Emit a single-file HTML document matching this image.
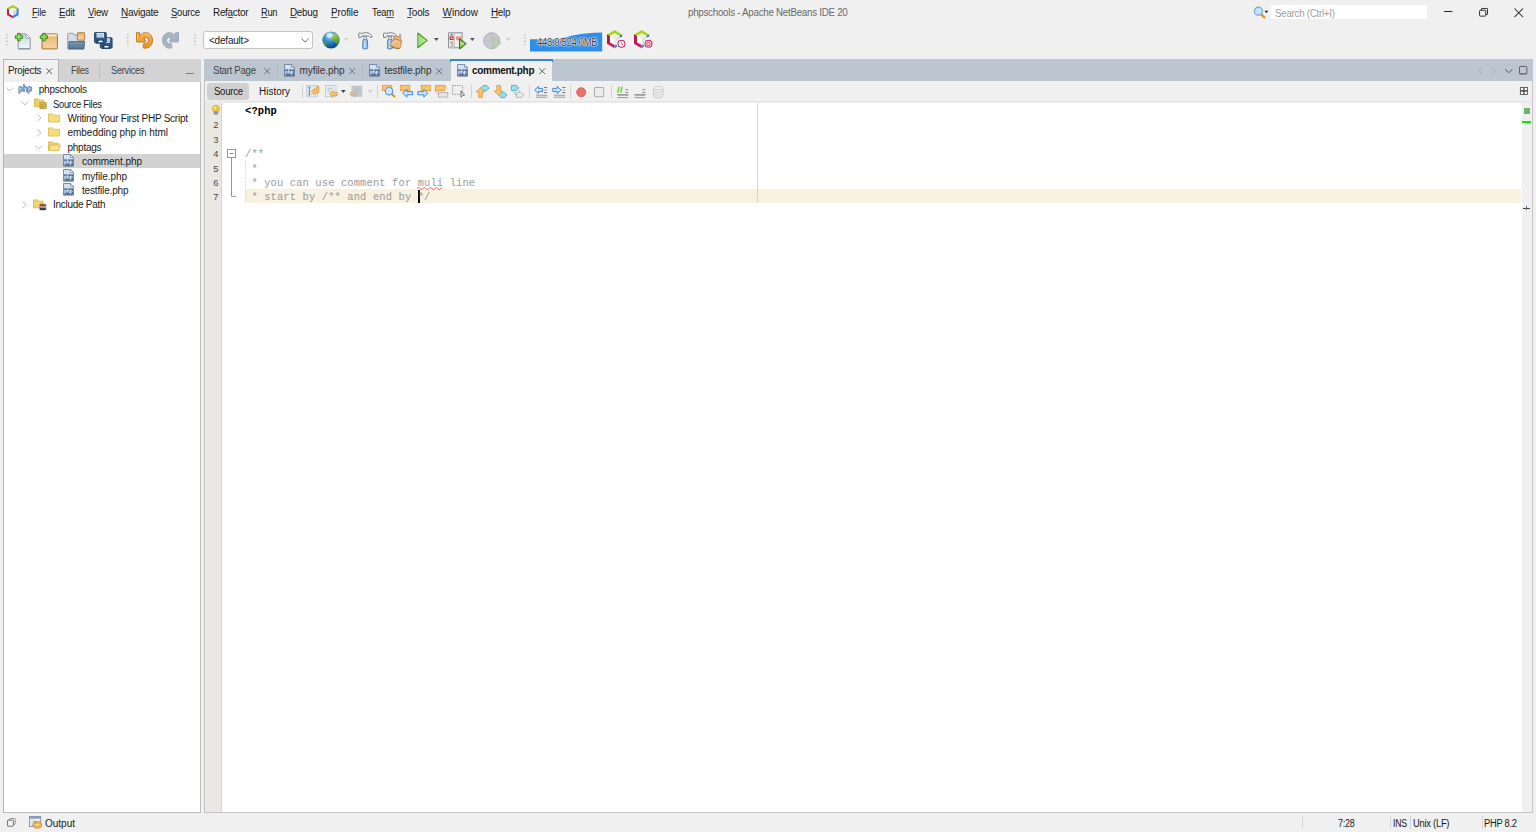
<!DOCTYPE html>
<html><head><meta charset="utf-8"><title>phpschools - Apache NetBeans IDE 20</title>
<style>
html,body{margin:0;padding:0;}
body{width:1536px;height:832px;overflow:hidden;background:#f0f0f0;position:relative;font-family:'Liberation Sans',sans-serif;}
#s div{position:absolute;box-sizing:border-box;}
.t{position:absolute;white-space:pre;}
.t u{text-decoration:underline;text-underline-offset:1px;text-decoration-thickness:1px;text-decoration-color:#505050;}
svg{position:absolute;overflow:visible;}
</style></head><body>
<div id="s">
<div style="left:3px;top:59px;width:198px;height:754px;background:#ffffff;border:1px solid #bebebe;border-left-color:#b4b4b4;"></div>
<div style="left:3px;top:59px;width:198px;height:22.5px;background:#d3d3d3;"></div>
<div style="left:3px;top:59px;width:56px;height:22.5px;background:#b7b7b7;"></div>
<div style="left:4px;top:60px;width:54.3px;height:21.5px;background:#f0f0f0;"></div>
<div style="left:99px;top:63px;width:1px;height:16px;background:#c0c0c0;"></div>
<div style="left:4px;top:153.8px;width:196px;height:14.1px;background:#d2d2d2;"></div>
<div style="left:204px;top:59px;width:1329px;height:754px;background:#ffffff;border:1px solid #c4c4c4;border-top:none;"></div>
<div style="left:204px;top:59px;width:1329px;height:22.2px;background:#bcc6d1;"></div>
<div style="left:450.4px;top:59px;width:102.4px;height:2.6px;background:#3b86d2;"></div>
<div style="left:451px;top:61.4px;width:101.4px;height:19.6px;background:#f0f0f0;"></div>
<div style="left:277px;top:63.5px;width:1px;height:14px;background:#b2bcc7;"></div>
<div style="left:362px;top:63.5px;width:1px;height:14px;background:#b2bcc7;"></div>
<div style="left:205px;top:81px;width:1327px;height:20px;background:#f0f0f0;"></div>
<div style="left:205px;top:100.6px;width:1327px;height:2.8px;background:linear-gradient(#f0f0f0,#dedede 42%,#ececec 75%,#ffffff);"></div>
<div style="left:206.6px;top:83.1px;width:42.8px;height:16.6px;background:#d0d0d0;border-radius:3px;"></div>
<div style="left:205px;top:103px;width:16.2px;height:709px;background:#e9e8e2;"></div>
<div style="left:221.2px;top:103px;width:0.9px;height:709px;background:#d4d4d2;"></div>
<div style="left:245px;top:189.2px;width:1276px;height:14px;background:#f8f1df;"></div>
<div style="left:757px;top:103px;width:1px;height:100.2px;background:#ebc9e3;"></div>
<div style="left:1521.5px;top:103px;width:10.5px;height:709px;background:#f0f0f0;"></div>
<div style="left:1523.5px;top:108px;width:6px;height:6px;background:#6db36d;"></div>
<div style="left:1522px;top:121px;width:9px;height:1.6px;background:#00f000;"></div>
<div style="left:1523px;top:207.6px;width:7px;height:1px;background:#444;"></div>
<div style="left:1526px;top:206px;width:1px;height:4px;background:#666;"></div>
<div style="left:418px;top:189.6px;width:1.5px;height:13.4px;background:#000;"></div>
<div style="left:301.5px;top:84.8px;width:1px;height:13.6px;background:#d2d2d2;"></div>
<div style="left:377px;top:84.8px;width:1px;height:13.6px;background:#d2d2d2;"></div>
<div style="left:470.5px;top:84.8px;width:1px;height:13.6px;background:#d2d2d2;"></div>
<div style="left:529px;top:84.8px;width:1px;height:13.6px;background:#d2d2d2;"></div>
<div style="left:570px;top:84.8px;width:1px;height:13.6px;background:#d2d2d2;"></div>
<div style="left:610.5px;top:84.8px;width:1px;height:13.6px;background:#d2d2d2;"></div>
<div style="left:202.6px;top:31px;width:110.9px;height:17.8px;background:#ffffff;border:1px solid #c4c4c4;border-radius:3px;"></div>
<div style="left:1271px;top:5px;width:156px;height:14px;background:#ffffff;"></div>
<div style="left:1301.5px;top:816px;width:1px;height:13px;background:#d5d5d5;"></div>
<div style="left:1389.5px;top:816px;width:1px;height:13px;background:#d5d5d5;"></div>
<div style="left:1410px;top:816px;width:1px;height:13px;background:#d5d5d5;"></div>
<div style="left:1482px;top:816px;width:1px;height:13px;background:#d5d5d5;"></div>
<div style="left:186.2px;top:72.9px;width:8.2px;height:1.1px;background:#7c7c7c;"></div>
</div>
<div id="i">
<svg width="0" height="0" style="position:absolute"><defs>
<linearGradient id="gPage" x1="0" y1="0" x2="0" y2="1"><stop offset="0" stop-color="#c9d6e4"/><stop offset="1" stop-color="#f4f7fa"/></linearGradient>
<linearGradient id="gOr" x1="0" y1="0" x2="0" y2="1"><stop offset="0" stop-color="#e9b473"/><stop offset="1" stop-color="#f6d3a4"/></linearGradient>
<linearGradient id="gPlus" x1="0" y1="0" x2="0" y2="1"><stop offset="0" stop-color="#4fb52a"/><stop offset="1" stop-color="#9be06a"/></linearGradient>
<linearGradient id="gFold" x1="0" y1="0" x2="0" y2="1"><stop offset="0" stop-color="#7a97b4"/><stop offset="1" stop-color="#557390"/></linearGradient>
<linearGradient id="gUndo" x1="0" y1="0" x2="0" y2="1"><stop offset="0" stop-color="#f7b24a"/><stop offset="1" stop-color="#f0921c"/></linearGradient>
<radialGradient id="gGlobe" cx="0.38" cy="0.3" r="0.75"><stop offset="0" stop-color="#bfe6fb"/><stop offset="0.35" stop-color="#3f9ddc"/><stop offset="1" stop-color="#0b4a8c"/></radialGradient>
<linearGradient id="gRun" x1="0" y1="0" x2="1" y2="0"><stop offset="0" stop-color="#8fd35f"/><stop offset="1" stop-color="#d4f1bd"/></linearGradient>
<linearGradient id="gFy" x1="0" y1="0" x2="0" y2="1"><stop offset="0" stop-color="#f5e28a"/><stop offset="1" stop-color="#ecd25e"/></linearGradient>
</defs></svg>
<svg style="left:5.5px;top:34.2px" width="2" height="12" viewBox="0 0 2 12"><rect x="0" y="0.0" width="1.6" height="1.5" fill="#c3c3c3"/><rect x="0" y="3.25" width="1.6" height="1.5" fill="#c3c3c3"/><rect x="0" y="6.5" width="1.6" height="1.5" fill="#c3c3c3"/><rect x="0" y="9.75" width="1.6" height="1.5" fill="#c3c3c3"/></svg>
<svg style="left:127.2px;top:34.2px" width="2" height="12" viewBox="0 0 2 12"><rect x="0" y="0.0" width="1.6" height="1.5" fill="#c3c3c3"/><rect x="0" y="3.25" width="1.6" height="1.5" fill="#c3c3c3"/><rect x="0" y="6.5" width="1.6" height="1.5" fill="#c3c3c3"/><rect x="0" y="9.75" width="1.6" height="1.5" fill="#c3c3c3"/></svg>
<svg style="left:194.4px;top:34.2px" width="2" height="12" viewBox="0 0 2 12"><rect x="0" y="0.0" width="1.6" height="1.5" fill="#c3c3c3"/><rect x="0" y="3.25" width="1.6" height="1.5" fill="#c3c3c3"/><rect x="0" y="6.5" width="1.6" height="1.5" fill="#c3c3c3"/><rect x="0" y="9.75" width="1.6" height="1.5" fill="#c3c3c3"/></svg>
<svg style="left:523.8px;top:34.2px" width="2" height="12" viewBox="0 0 2 12"><rect x="0" y="0.0" width="1.6" height="1.5" fill="#c3c3c3"/><rect x="0" y="3.25" width="1.6" height="1.5" fill="#c3c3c3"/><rect x="0" y="6.5" width="1.6" height="1.5" fill="#c3c3c3"/><rect x="0" y="9.75" width="1.6" height="1.5" fill="#c3c3c3"/></svg>
<svg style="left:7px;top:5.2px" width="11.6" height="13.2" viewBox="0 0 11.6 13.2"><polygon points="5.8,0 11.6,3.3 11.6,9.9 5.8,13.2 0,9.9 0,3.3" fill="#e9eef3"/><polygon points="5.8,0 11.6,3.3 9.4,4.6 5.8,2.6 2.2,4.6 0,3.3" fill="#a5c722"/><polygon points="0,3.3 2.2,4.6 2.2,8.7 5.8,10.7 5.8,13.2 0,9.9" fill="#d3184f"/><polygon points="11.6,3.3 9.4,4.6 9.4,8.7 5.8,10.7 5.8,13.2 11.6,9.9" fill="#2a84e6"/><polygon points="5.8,6.6 9.4,4.6 9.4,8.7 5.8,10.7" fill="#cfdbe8"/><polygon points="5.8,6.6 2.2,4.6 2.2,8.7 5.8,10.7" fill="#fbfbfb"/><polygon points="5.8,2.6 9.4,4.6 5.8,6.6 2.2,4.6" fill="#eef3e0"/></svg>
<svg style="left:15px;top:32.6px" width="17" height="17" viewBox="0 0 17 17"><path d="M3.2 0.9h7.6l4.4 4.4v10.4H3.2z" fill="url(#gPage)" stroke="#8d99a8" stroke-width="1"/><path d="M10.8 0.9v4.4h4.4z" fill="#eef2f7" stroke="#8d99a8" stroke-width="0.8"/><path d="M3.4 15.9h11.8" stroke="#7f8b9a" stroke-width="0.9"/><g transform="translate(0,0.2)"><path d="M2.6 0.2h2.6v2.4h2.4v2.6H5.2v2.4H2.6V5.2H0.2V2.6h2.4z" fill="url(#gPlus)" stroke="#2c8c12" stroke-width="0.9" stroke-linejoin="round"/><path d="M3.3 1.2h1.2v2.1h2.1v0.7H1.2V3.3h2.1z" fill="#d5f5b8" opacity="0.7"/></g></svg>
<svg style="left:40px;top:32.6px" width="18.5" height="17" viewBox="0 0 18.5 17"><rect x="2" y="0.9" width="15.4" height="15" rx="0.8" fill="url(#gOr)" stroke="#a9743a" stroke-width="1"/><rect x="2.6" y="1.5" width="14.2" height="1.9" fill="#fbe9d0"/><g transform="translate(0,0.2)"><path d="M2.6 0.2h2.6v2.4h2.4v2.6H5.2v2.4H2.6V5.2H0.2V2.6h2.4z" fill="url(#gPlus)" stroke="#2c8c12" stroke-width="0.9" stroke-linejoin="round"/><path d="M3.3 1.2h1.2v2.1h2.1v0.7H1.2V3.3h2.1z" fill="#d5f5b8" opacity="0.7"/></g></svg>
<svg style="left:67px;top:31.6px" width="18.5" height="18" viewBox="0 0 18.5 18"><path d="M0.7 16.5V2.3q0-1 1-1h4.2q1 0 1 1v0.7h9.8v13.5z" fill="#d3dde8" stroke="#8997a6" stroke-width="0.9"/><path d="M1.6 17.1l0.5-7.5h15.6l-0.9 7.5z" fill="url(#gFold)" stroke="#4a6581" stroke-width="0.9" stroke-linejoin="round"/><rect x="10.3" y="0.7" width="7.4" height="7.4" rx="0.6" fill="url(#gOr)" stroke="#a9743a" stroke-width="0.9"/></svg>
<svg style="left:94px;top:31.8px" width="19" height="18" viewBox="0 0 19 18"><g transform="translate(5.8,5.3)"><path d="M0.5 1.3q0-0.8 0.8-0.8h10.2q0.8 0 0.8 0.8v8.7l-1.2 1.2H1.7L0.5 10z" fill="#2d5c8a" stroke="#1d4168" stroke-width="0.9"/><rect x="2.6" y="0.9" width="7.4" height="4.6" fill="#e8edf2"/><rect x="3.4" y="2.2" width="5.8" height="0.9" fill="#9aa7b5"/><rect x="3.4" y="3.8" width="5.8" height="0.8" fill="#9aa7b5"/><rect x="2.4" y="7.6" width="7.6" height="3.2" fill="#1d4168"/><ellipse cx="6.6" cy="9.4" rx="2.4" ry="0.9" fill="#ffffff"/></g><g transform="translate(0,0)"><path d="M0.5 1.3q0-0.8 0.8-0.8h10.2q0.8 0 0.8 0.8v8.7l-1.2 1.2H1.7L0.5 10z" fill="#2d5c8a" stroke="#1d4168" stroke-width="0.9"/><rect x="2.6" y="0.9" width="7.4" height="4.6" fill="#e8edf2"/><rect x="3.4" y="2.2" width="5.8" height="0.9" fill="#9aa7b5"/><rect x="3.4" y="3.8" width="5.8" height="0.8" fill="#9aa7b5"/><rect x="2.4" y="7.6" width="7.6" height="3.2" fill="#1d4168"/><ellipse cx="6.6" cy="9.4" rx="2.4" ry="0.9" fill="#ffffff"/></g></svg>
<svg style="left:135.7px;top:32.4px" width="17.8" height="16.84" viewBox="0 0 18.500 17.500"><path d="M0.500 0.700H3.700V3.800C5.400 1.700 7.600 0.700 10 0.700C14.200 0.700 17.200 4.200 17.200 8.700C17.200 13.400 13.800 16.800 9.600 16.800H8.200Q7.600 16.800 7.600 16.200V12.800Q7.600 12.200 8.200 12.200H9.400C11.400 12.200 12.900 10.800 12.900 8.700C12.900 6.900 11.700 5.700 10.200 5.700C9.400 5.700 8.800 5.900 8.300 6.300L9.900 9.600V10.400H1.100Q0.500 10.400 0.500 9.800Z" fill="url(#gUndo)" stroke="#b86c12" stroke-width="0.900" stroke-linejoin="round"/><path d="M1.500 1.800V9.200M4.800 4C6.400 2.400 8 1.800 10 1.800C12.600 1.800 14.600 3.200 15.600 5.400" fill="none" stroke="#fbd69a" stroke-width="0.800" opacity="0.850"/></svg>
<svg style="left:162px;top:32.4px" width="17.8" height="16.84" viewBox="0 0 18.500 17.500"><g transform="translate(17.700,0) scale(-1,1)"><path d="M0.500 0.700H3.700V3.800C5.400 1.700 7.600 0.700 10 0.700C14.200 0.700 17.200 4.200 17.200 8.700C17.200 13.400 13.800 16.800 9.600 16.800H8.200Q7.600 16.800 7.600 16.200V12.800Q7.600 12.200 8.200 12.200H9.400C11.400 12.200 12.900 10.800 12.900 8.700C12.900 6.900 11.700 5.700 10.200 5.700C9.400 5.700 8.800 5.900 8.300 6.300L9.900 9.600V10.400H1.100Q0.500 10.400 0.500 9.800Z" fill="#a4b5c6" stroke="#94a6b8" stroke-width="0.900" stroke-linejoin="round"/></g></svg>
<svg style="left:301px;top:38px" width="9" height="5" viewBox="0 0 9 5"><path d="M0.6 0.5L4.2 4.1L7.8 0.5" fill="none" stroke="#6e6e6e" stroke-width="1"/></svg>
<svg style="left:344px;top:38.4px" width="4.4" height="2.8" viewBox="0 0 5 3.200"><path d="M0 0h5L2.500 3.200z" fill="#cccccc"/></svg>
<svg style="left:434px;top:38.3px" width="4.7" height="3" viewBox="0 0 5 3.2"><path d="M0 0h5L2.500 3.200z" fill="#555"/></svg>
<svg style="left:470.2px;top:38.3px" width="4.7" height="3" viewBox="0 0 5 3.2"><path d="M0 0h5L2.500 3.200z" fill="#555"/></svg>
<svg style="left:506.2px;top:38.3px" width="4.7" height="3" viewBox="0 0 5 3.2"><path d="M0 0h5L2.500 3.200z" fill="#cfcfcf"/></svg>
<svg width="0" height="0" style="position:absolute"><defs><linearGradient id="gLand" x1="0" y1="0" x2="0.300" y2="1"><stop offset="0" stop-color="#b9d95a"/><stop offset="1" stop-color="#4f9434"/></linearGradient><radialGradient id="gGlobe2" cx="0.420" cy="0.250" r="0.800"><stop offset="0" stop-color="#d8f1fd"/><stop offset="0.300" stop-color="#4aa6e2"/><stop offset="0.700" stop-color="#1565a8"/><stop offset="1" stop-color="#083a70"/></radialGradient></defs></svg>
<svg style="left:322.4px;top:31px" width="18" height="18" viewBox="0 0 18 18"><circle cx="9" cy="9" r="8.600" fill="url(#gGlobe2)"/><path d="M10.800 3.400c1.200-1 2.600-0.800 3.800 0c1.400 1 2.400 2.600 2.700 4.400c0.200 2-0.400 4-1.800 5.400c-1 0.800-1.600-0.400-2.200-1.400c-0.600-1.200-0.400-2-1.800-2.400c-1.400-0.400-3.200-0.600-3-2c0.200-1.200 1.600-1.400 2.200-2.200c0.400-0.600-0.300-1.200 0.100-1.800z" fill="url(#gLand)"/><path d="M0.600 7.600c-0.200 1.600 0.200 3.600 1.200 5c1 1.400 2.200 2.400 3.400 2.800c-0.400-1-0.200-2-0.800-3c-0.800-1.200-2.200-1.600-2.800-2.800c-0.400-0.800-0.600-1.400-1-2z" fill="#5e9e38"/><path d="M1.600 5c0.800-1.800 2.400-3.400 4.400-4.200c-0.800 1-2.400 1.600-3 2.800c-0.400 0.800-0.800 1.200-1.400 1.400z" fill="#76b244"/><path d="M11.500 1c1.500 0.300 2.800 1.100 3.800 2.200c-1-0.300-1.600-0.900-2.600-1.200c-0.600-0.200-1-0.600-1.200-1z" fill="#8cc04c"/><ellipse cx="7.800" cy="4.200" rx="3.400" ry="2.400" fill="#ffffff" opacity="0.450"/></svg>
<svg style="left:357.6px;top:31.8px" width="15" height="17.5" viewBox="0 0 15 17.500"><g transform="translate(0,0)"><path d="M5 8.200Q5 7.400 5.800 7.400H8.600Q9.400 7.400 9.400 8.200L9.700 15.800Q9.700 16.800 8.800 16.800H5.600Q4.700 16.800 4.700 15.800Z" fill="#86bdec" stroke="#3c7cbc" stroke-width="0.900"/><rect x="6" y="8.400" width="1.500" height="7.600" fill="#d4e9fb" opacity="0.900"/><path d="M5.700 7.600L5.900 4H8.500L8.700 7.600Z" fill="#e6e9ec" stroke="#7d838a" stroke-width="0.800"/><path d="M0.700 1.700C0.700 0.900 1.400 0.600 2.200 0.900L3.600 1.700C5.600 0.500 9.400 0.300 11.600 1.600C12.800 2.400 13.800 3.600 14.200 5L12.600 5.600C11.800 4.400 10.800 3.900 9.300 3.900H5.300C4.400 3.900 3.600 4.100 3.100 4.700L2.900 5.500H0.900Z" fill="#f3f5f7" stroke="#767c84" stroke-width="1" stroke-linejoin="round"/></g></svg>
<svg style="left:382.4px;top:31.8px" width="20" height="17.5" viewBox="0 0 20 17.5"><g transform="translate(0.8,0)"><path d="M5 8.200Q5 7.400 5.800 7.400H8.600Q9.400 7.400 9.400 8.200L9.700 15.800Q9.700 16.800 8.800 16.800H5.600Q4.700 16.800 4.700 15.800Z" fill="#86bdec" stroke="#3c7cbc" stroke-width="0.900"/><rect x="6" y="8.400" width="1.500" height="7.600" fill="#d4e9fb" opacity="0.900"/><path d="M5.700 7.600L5.900 4H8.500L8.700 7.600Z" fill="#e6e9ec" stroke="#7d838a" stroke-width="0.800"/><path d="M0.700 1.700C0.700 0.900 1.400 0.600 2.200 0.900L3.600 1.700C5.600 0.500 9.400 0.300 11.600 1.600C12.800 2.400 13.800 3.600 14.200 5L12.600 5.600C11.800 4.400 10.800 3.900 9.300 3.900H5.300C4.400 3.900 3.600 4.100 3.100 4.700L2.900 5.500H0.900Z" fill="#f3f5f7" stroke="#767c84" stroke-width="1" stroke-linejoin="round"/></g><path d="M17.800 2.200l1.400 0.800l-1.600 4.400l-1.500-0.600z" fill="#c9ced3" stroke="#858c94" stroke-width="0.700"/><path d="M12.400 4.400C14.600 4 17.600 5 19 7C19.900 10.400 19 14.400 17.600 16.600C14.600 17 10.200 15.600 7.400 12.800C9.800 10.800 11.400 7.600 12.400 4.400Z" fill="#f0c48a" stroke="#b07a38" stroke-width="0.800" stroke-linejoin="round"/><path d="M11.600 7C14 6.600 17.400 7.800 19.200 9.600" fill="none" stroke="#d9824a" stroke-width="1.300"/><path d="M10 13l3.600 3M12.600 11.800l3 4.400M15.200 10.800l1.800 5" stroke="#d29a58" stroke-width="0.600"/><path d="M8 13.200C10.800 15.600 14.400 16.800 17.400 16.400" fill="none" stroke="#9c6a2c" stroke-width="0.900"/></svg>
<svg style="left:416.6px;top:32px" width="11" height="17" viewBox="0 0 11 17"><path d="M0.900 1L0.900 15.800L10 8.400Z" fill="url(#gRun)" stroke="#379619" stroke-width="1.1" stroke-linejoin="round"/><path d="M1.900 3.200V13.400" stroke="#d9f5c4" stroke-width="0.7" opacity="0.8"/></svg>
<svg style="left:447.8px;top:31.6px" width="19" height="18" viewBox="0 0 19 18"><path d="M0.600 0.800h13.800l-0.600 1.400l0.600 1.400l-0.600 1.400l0.600 1.400l-0.600 1.400l0.600 1.400l-0.600 1.400l0.600 1.400l-0.600 1.400l0.600 1.400l-0.600 1.000H0.600z" fill="#eef1f4" stroke="#6f7f95" stroke-width="0.900" stroke-linejoin="round"/><rect x="1.100" y="1.300" width="5" height="14.200" fill="#f3e9c6"/><path d="M6.300 1.200v14.400" stroke="#9aa5b4" stroke-width="0.600"/><rect x="1.600" y="4.300" width="4" height="3.800" rx="0.400" fill="#b23c3a"/><rect x="2.800" y="5.400" width="1.700" height="1.500" fill="#fbe4e0"/><path d="M2.400 2.900h2.500M3.600 1.400v1.500" stroke="#555" stroke-width="0.800"/><path d="M2.200 10.300h2.600l-1.400 1.700c1 0 1.700 0.600 1.700 1.400c0 0.900-0.800 1.500-1.800 1.500c-0.500 0-1-0.200-1.300-0.500" fill="none" stroke="#8c8c8c" stroke-width="0.900" stroke-linejoin="round"/><rect x="7.900" y="4.300" width="5.400" height="3.900" fill="#fb8f8c"/><path d="M11.500 6.800L11.500 16.800L17.900 11.800Z" fill="url(#gRun)" stroke="#2a8212" stroke-width="1.100" stroke-linejoin="round"/></svg>
<svg style="left:482.6px;top:31.6px" width="19" height="18" viewBox="0 0 19 18"><circle cx="8.700" cy="8.700" r="8" fill="#c6c9cc" stroke="#a9acaf" stroke-width="0.900"/><path d="M8.300 8.700L8.700 2.400L9.100 8.700Z" fill="#e3b08f" stroke="#e3b08f" stroke-width="0.500"/><path d="M8.700 0.800V16.600M0.800 8.700H16.600" stroke="#bdc0c3" stroke-width="0.400"/><path d="M10.800 5.800L10.800 16.800L18 11.300Z" fill="#bcd0b5" stroke="#a9c3a0" stroke-width="0.800" stroke-linejoin="round" opacity="0.920"/></svg>
<svg style="left:530px;top:31.6px" width="72.5" height="19.8" viewBox="0 0 72.500 19.800"><path d="M0 19.400V7.200H24C32 6.900 38 4.200 44 3.200C54 1.600 62 0.900 72.200 0.600V19.400Z" fill="#2f8ee8"/></svg>
<svg style="left:606.8px;top:30.2px" width="22" height="20" viewBox="0 0 22 20"><g transform="translate(0,0) scale(1.0)"><polygon points="7.600,0 15.200,4.400 15.200,13.800 7.600,18.200 0,13.800 0,4.400" fill="#ffffff"/><polygon points="7.600,0 15.200,4.400 12.400,6.000 7.600,3.300 2.800,6.000 0,4.400" fill="#a8d420"/><polygon points="0,4.400 2.800,6.000 2.800,12.200 7.600,15.000 7.600,18.200 0,13.800" fill="#d4164f"/><polygon points="0,4.400 2.800,6.000 2.800,12.200 0,13.800" fill="#b3184a"/><polygon points="15.200,4.400 12.400,6.000 12.400,7.800 15.200,6.600" fill="#1c6fd8"/><polygon points="7.600,15.000 7.600,18.200 10.200,16.700 9.400,14.000" fill="#2a8af0"/><polygon points="7.600,8.700 12.400,6.000 12.400,12.200 7.600,15.000" fill="#d9e4ee"/><polygon points="7.600,3.300 12.400,6.000 7.600,8.700 2.800,6.000" fill="#eef4dc"/></g><circle cx="14.500" cy="13.700" r="4.800" fill="#fff"/><circle cx="14.500" cy="13.700" r="3.500" fill="#fff" stroke="#c4245e" stroke-width="1.100"/><path d="M14.300 11.800V13.900L16 14.800" fill="none" stroke="#e04a7a" stroke-width="0.900"/></svg>
<svg style="left:634px;top:30.2px" width="22" height="20" viewBox="0 0 22 20"><g transform="translate(0,0) scale(1.0)"><polygon points="7.600,0 15.200,4.400 15.200,13.800 7.600,18.200 0,13.800 0,4.400" fill="#ffffff"/><polygon points="7.600,0 15.200,4.400 12.400,6.000 7.600,3.300 2.800,6.000 0,4.400" fill="#a8d420"/><polygon points="0,4.400 2.800,6.000 2.800,12.200 7.600,15.000 7.600,18.200 0,13.800" fill="#d4164f"/><polygon points="0,4.400 2.800,6.000 2.800,12.200 0,13.800" fill="#b3184a"/><polygon points="15.200,4.400 12.400,6.000 12.400,7.800 15.200,6.600" fill="#1c6fd8"/><polygon points="7.600,15.000 7.600,18.200 10.200,16.700 9.400,14.000" fill="#2a8af0"/><polygon points="7.600,8.700 12.400,6.000 12.400,12.200 7.600,15.000" fill="#d9e4ee"/><polygon points="7.600,3.300 12.400,6.000 7.600,8.700 2.800,6.000" fill="#eef4dc"/></g><circle cx="14.500" cy="13.700" r="4.800" fill="#fff"/><circle cx="14.500" cy="13.700" r="3.500" fill="#fff" stroke="#c4245e" stroke-width="1.100"/><rect x="12.900" y="11.900" width="3.200" height="3.600" rx="0.600" fill="#f6d0da" stroke="#e0305e" stroke-width="0.900"/></svg>
<svg style="left:1252.5px;top:5.5px" width="16" height="13" viewBox="0 0 16 13"><path d="M8 8.200L11.400 11.400" stroke="#dc9600" stroke-width="2.200" stroke-linecap="round"/><circle cx="5.400" cy="5.200" r="4" fill="#cbe3fc" stroke="#6aa6e8" stroke-width="1.200"/><path d="M11.500 4.700h3.800l-1.900 2.300z" fill="#111"/></svg>
<svg style="left:1444px;top:11px" width="8.5" height="1.2" viewBox="0 0 8.500 1.200"><rect width="8.500" height="1" fill="#222"/></svg>
<svg style="left:1479px;top:7.9px" width="9.2" height="8.7" viewBox="0 0 10 9.500"><path d="M2.600 2.400V1.100q0-0.600 0.600-0.600h5.500q0.600 0 0.600 0.600v5.400q0 0.600-0.600 0.600h-1.300" fill="none" stroke="#222" stroke-width="1"/><rect x="0.600" y="2.500" width="6.800" height="6.400" rx="0.800" fill="none" stroke="#222" stroke-width="1"/></svg>
<svg style="left:1514px;top:7.8px" width="9.5" height="9.5" viewBox="0 0 9.500 9.500"><path d="M0.500 0.500L9 9M9 0.500L0.500 9" stroke="#222" stroke-width="1.050"/></svg>
<svg style="left:46px;top:67.8px" width="6.4" height="6.4" viewBox="0 0 6.4 6.4"><path d="M0.300 0.300L6.1000000000000005 6.1000000000000005M6.1000000000000005 0.300L0.300 6.1000000000000005" stroke="#555" stroke-width="0.900"/></svg>
<svg style="left:263.6px;top:67.8px" width="6.4" height="6.4" viewBox="0 0 6.4 6.4"><path d="M0.300 0.300L6.1000000000000005 6.1000000000000005M6.1000000000000005 0.300L0.300 6.1000000000000005" stroke="#666" stroke-width="0.900"/></svg>
<svg style="left:349.2px;top:67.8px" width="6.4" height="6.4" viewBox="0 0 6.4 6.4"><path d="M0.300 0.300L6.1000000000000005 6.1000000000000005M6.1000000000000005 0.300L0.300 6.1000000000000005" stroke="#666" stroke-width="0.900"/></svg>
<svg style="left:436.2px;top:67.8px" width="6.4" height="6.4" viewBox="0 0 6.4 6.4"><path d="M0.300 0.300L6.1000000000000005 6.1000000000000005M6.1000000000000005 0.300L0.300 6.1000000000000005" stroke="#666" stroke-width="0.900"/></svg>
<svg style="left:539.2px;top:67.8px" width="6.4" height="6.4" viewBox="0 0 6.4 6.4"><path d="M0.300 0.300L6.1000000000000005 6.1000000000000005M6.1000000000000005 0.300L0.300 6.1000000000000005" stroke="#555" stroke-width="0.900"/></svg>
<svg style="left:6.2px;top:87px" width="8" height="5" viewBox="0 0 8 5"><path d="M0.400 0.500L3.800 4L7.200 0.500" fill="none" stroke="#bdbdbd" stroke-width="1"/></svg>
<svg style="left:20.6px;top:101.4px" width="8" height="5" viewBox="0 0 8 5"><path d="M0.400 0.500L3.800 4L7.200 0.500" fill="none" stroke="#bdbdbd" stroke-width="1"/></svg>
<svg style="left:35px;top:145.2px" width="8" height="5" viewBox="0 0 8 5"><path d="M0.400 0.500L3.800 4L7.200 0.500" fill="none" stroke="#bdbdbd" stroke-width="1"/></svg>
<svg style="left:36.9px;top:114.3px" width="5" height="8" viewBox="0 0 5 8"><path d="M0.500 0.400L4 3.800L0.500 7.200" fill="none" stroke="#bdbdbd" stroke-width="1"/></svg>
<svg style="left:36.9px;top:128.7px" width="5" height="8" viewBox="0 0 5 8"><path d="M0.500 0.400L4 3.800L0.500 7.200" fill="none" stroke="#bdbdbd" stroke-width="1"/></svg>
<svg style="left:22.3px;top:200.6px" width="5" height="8" viewBox="0 0 5 8"><path d="M0.500 0.400L4 3.800L0.500 7.200" fill="none" stroke="#bdbdbd" stroke-width="1"/></svg>
<svg style="left:18.4px;top:82.8px" width="15" height="12" viewBox="0 0 15 12"><path d="M1.400 10V4M1.400 5.200C1.700 3.600 4.300 3.500 4.300 6C4.300 8.500 1.700 8.400 1.400 7M6 1.500V8.300M6 5.600C6.300 3.600 8.700 3.500 8.700 5.400V8.300M10.500 10V4M10.500 5.200C10.800 3.600 13.400 3.500 13.400 6C13.400 8.500 10.800 8.400 10.500 7" fill="none" stroke="#4c6f96" stroke-width="1.700" stroke-linecap="round" stroke-linejoin="round"/><path d="M1.400 10V4M1.400 5.200C1.700 3.600 4.300 3.500 4.300 6C4.300 8.500 1.700 8.400 1.400 7M6 1.500V8.300M6 5.600C6.300 3.600 8.700 3.500 8.700 5.400V8.300M10.500 10V4M10.500 5.200C10.800 3.600 13.400 3.500 13.400 6C13.400 8.500 10.800 8.400 10.500 7" fill="none" stroke="#b4d6f4" stroke-width="0.650" stroke-linecap="round" stroke-linejoin="round"/></svg>
<svg style="left:48.2px;top:112.9px" width="12" height="10" viewBox="0 0 12 10"><path d="M0.500 9V0.900h4.200l1 1.400h5.700V9z" fill="#f8dc7c" stroke="#d9b94c" stroke-width="0.800" stroke-linejoin="round"/></svg>
<svg style="left:48.2px;top:127.3px" width="12" height="10" viewBox="0 0 12 10"><path d="M0.500 9V0.900h4.200l1 1.400h5.700V9z" fill="#f8dc7c" stroke="#d9b94c" stroke-width="0.800" stroke-linejoin="round"/></svg>
<svg style="left:48px;top:141.4px" width="13" height="10.5" viewBox="0 0 13 10.500"><path d="M0.500 9.500V0.900h3.800l1 1.300h5v1.800" fill="#f3d46e" stroke="#d4b348" stroke-width="0.800" stroke-linejoin="round"/><path d="M0.600 9.600L2.400 4h10L10.600 9.600z" fill="#fae28c" stroke="#d4b348" stroke-width="0.800" stroke-linejoin="round"/></svg>
<svg style="left:33.6px;top:98.2px" width="13" height="11" viewBox="0 0 13 11"><path d="M0.500 8.800V0.900h3.800l1 1.300h4.600v6.600z" fill="#edd06a" stroke="#cfae46" stroke-width="0.800" stroke-linejoin="round"/><rect x="6" y="4.800" width="6.200" height="5.600" fill="#e3c55e" stroke="#a88a2e" stroke-width="0.800"/><path d="M6.400 6.700h5.400M6.400 8.500h5.400M8.200 6.700v3.500" stroke="#a88a2e" stroke-width="0.600"/></svg>
<svg style="left:33.2px;top:199.2px" width="14" height="11.5" viewBox="0 0 14 11.500"><path d="M0.500 8.800V0.900h3.800l1 1.300h4.800v6.600z" fill="#f3d46e" stroke="#d4b348" stroke-width="0.800" stroke-linejoin="round"/><rect x="6.800" y="5.200" width="6" height="1.800" rx="0.500" fill="#b5483c" stroke="#7a2c24" stroke-width="0.500"/><rect x="6.600" y="7.200" width="6.400" height="1.700" rx="0.500" fill="#e8dccc" stroke="#5a5048" stroke-width="0.500"/><rect x="6.800" y="9.100" width="6" height="1.800" rx="0.500" fill="#3c4660" stroke="#232a40" stroke-width="0.500"/></svg>
<svg style="left:63.2px;top:154.3px" width="11" height="12.5" viewBox="0 0 11 12.500"><path d="M0.500 0.500h7l3 3v8.500h-10z" fill="#d3e2f3" stroke="#5d7898" stroke-width="0.800"/><path d="M7.500 0.500v3h3z" fill="#f4f8fc" stroke="#5d7898" stroke-width="0.600"/><rect x="0.900" y="5.400" width="9.200" height="5.800" fill="#4a6b94"/><g transform="translate(1,4.900) scale(0.610,0.560)"><path d="M1.400 10V4M1.400 5.200C1.700 3.600 4.300 3.500 4.300 6C4.300 8.500 1.700 8.400 1.400 7M6 1.500V8.300M6 5.600C6.300 3.600 8.700 3.500 8.700 5.400V8.300M10.500 10V4M10.500 5.200C10.800 3.600 13.400 3.500 13.400 6C13.400 8.500 10.800 8.400 10.500 7" fill="none" stroke="#dfeaf6" stroke-width="1.500" stroke-linecap="round"/></g><path d="M0.500 11.800h10" stroke="#3f5878" stroke-width="0.800"/></svg>
<svg style="left:63.2px;top:168.7px" width="11" height="12.5" viewBox="0 0 11 12.500"><path d="M0.500 0.500h7l3 3v8.500h-10z" fill="#d3e2f3" stroke="#5d7898" stroke-width="0.800"/><path d="M7.500 0.500v3h3z" fill="#f4f8fc" stroke="#5d7898" stroke-width="0.600"/><rect x="0.900" y="5.400" width="9.200" height="5.800" fill="#4a6b94"/><g transform="translate(1,4.900) scale(0.610,0.560)"><path d="M1.400 10V4M1.400 5.200C1.700 3.600 4.300 3.500 4.300 6C4.300 8.500 1.700 8.400 1.400 7M6 1.500V8.300M6 5.600C6.300 3.600 8.700 3.500 8.700 5.400V8.300M10.500 10V4M10.500 5.200C10.800 3.600 13.400 3.500 13.400 6C13.400 8.500 10.800 8.400 10.500 7" fill="none" stroke="#dfeaf6" stroke-width="1.500" stroke-linecap="round"/></g><path d="M0.500 11.800h10" stroke="#3f5878" stroke-width="0.800"/></svg>
<svg style="left:63.2px;top:183.1px" width="11" height="12.5" viewBox="0 0 11 12.500"><path d="M0.500 0.500h7l3 3v8.500h-10z" fill="#d3e2f3" stroke="#5d7898" stroke-width="0.800"/><path d="M7.500 0.500v3h3z" fill="#f4f8fc" stroke="#5d7898" stroke-width="0.600"/><rect x="0.900" y="5.400" width="9.200" height="5.800" fill="#4a6b94"/><g transform="translate(1,4.900) scale(0.610,0.560)"><path d="M1.400 10V4M1.400 5.200C1.700 3.600 4.300 3.500 4.300 6C4.300 8.500 1.700 8.400 1.400 7M6 1.500V8.300M6 5.600C6.300 3.600 8.700 3.500 8.700 5.400V8.300M10.500 10V4M10.500 5.200C10.800 3.600 13.400 3.500 13.400 6C13.400 8.500 10.800 8.400 10.500 7" fill="none" stroke="#dfeaf6" stroke-width="1.500" stroke-linecap="round"/></g><path d="M0.500 11.800h10" stroke="#3f5878" stroke-width="0.800"/></svg>
<svg style="left:284px;top:63.8px" width="11" height="12.5" viewBox="0 0 11 12.500"><path d="M0.500 0.500h7l3 3v8.500h-10z" fill="#d3e2f3" stroke="#5d7898" stroke-width="0.800"/><path d="M7.500 0.500v3h3z" fill="#f4f8fc" stroke="#5d7898" stroke-width="0.600"/><rect x="0.900" y="5.400" width="9.200" height="5.800" fill="#4a6b94"/><g transform="translate(1,4.900) scale(0.610,0.560)"><path d="M1.400 10V4M1.400 5.200C1.700 3.600 4.300 3.500 4.300 6C4.300 8.500 1.700 8.400 1.400 7M6 1.500V8.300M6 5.600C6.300 3.600 8.700 3.500 8.700 5.400V8.300M10.500 10V4M10.500 5.200C10.800 3.600 13.400 3.500 13.400 6C13.400 8.500 10.800 8.400 10.500 7" fill="none" stroke="#dfeaf6" stroke-width="1.500" stroke-linecap="round"/></g><path d="M0.500 11.800h10" stroke="#3f5878" stroke-width="0.800"/></svg>
<svg style="left:369.2px;top:63.8px" width="11" height="12.5" viewBox="0 0 11 12.500"><path d="M0.500 0.500h7l3 3v8.500h-10z" fill="#d3e2f3" stroke="#5d7898" stroke-width="0.800"/><path d="M7.500 0.500v3h3z" fill="#f4f8fc" stroke="#5d7898" stroke-width="0.600"/><rect x="0.900" y="5.400" width="9.200" height="5.800" fill="#4a6b94"/><g transform="translate(1,4.900) scale(0.610,0.560)"><path d="M1.400 10V4M1.400 5.200C1.700 3.600 4.300 3.500 4.300 6C4.300 8.500 1.700 8.400 1.400 7M6 1.500V8.300M6 5.600C6.300 3.600 8.700 3.500 8.700 5.400V8.300M10.500 10V4M10.500 5.200C10.800 3.600 13.400 3.500 13.400 6C13.400 8.500 10.800 8.400 10.500 7" fill="none" stroke="#dfeaf6" stroke-width="1.500" stroke-linecap="round"/></g><path d="M0.500 11.800h10" stroke="#3f5878" stroke-width="0.800"/></svg>
<svg style="left:456.6px;top:63.8px" width="11" height="12.5" viewBox="0 0 11 12.500"><path d="M0.500 0.500h7l3 3v8.500h-10z" fill="#d3e2f3" stroke="#5d7898" stroke-width="0.800"/><path d="M7.500 0.500v3h3z" fill="#f4f8fc" stroke="#5d7898" stroke-width="0.600"/><rect x="0.900" y="5.400" width="9.200" height="5.800" fill="#4a6b94"/><g transform="translate(1,4.900) scale(0.610,0.560)"><path d="M1.400 10V4M1.400 5.200C1.700 3.600 4.300 3.500 4.300 6C4.300 8.500 1.700 8.400 1.400 7M6 1.500V8.300M6 5.600C6.300 3.600 8.700 3.500 8.700 5.400V8.300M10.500 10V4M10.500 5.200C10.800 3.600 13.400 3.500 13.400 6C13.400 8.500 10.800 8.400 10.500 7" fill="none" stroke="#dfeaf6" stroke-width="1.500" stroke-linecap="round"/></g><path d="M0.500 11.800h10" stroke="#3f5878" stroke-width="0.800"/></svg>
<svg style="left:1478.4px;top:67.2px" width="5" height="7.5" viewBox="0 0 5 7.500"><path d="M4.300 0.400L0.700 3.700L4.300 7" fill="none" stroke="#a4aeb9" stroke-width="0.900"/></svg>
<svg style="left:1491px;top:67.2px" width="5" height="7.5" viewBox="0 0 5 7.500"><path d="M0.700 0.400L4.300 3.700L0.700 7" fill="none" stroke="#a4aeb9" stroke-width="0.900"/></svg>
<svg style="left:1504.6px;top:68.8px" width="8" height="4.5" viewBox="0 0 8 4.500"><path d="M0.400 0.400L3.800 3.800L7.200 0.400" fill="none" stroke="#555" stroke-width="1"/></svg>
<svg style="left:1519px;top:66.2px" width="8.5" height="8.8" viewBox="0 0 8.500 8.800"><rect x="0.500" y="0.500" width="7.300" height="7.500" rx="0.600" fill="none" stroke="#666" stroke-width="1"/><path d="M0.500 7.700h7.300" stroke="#666" stroke-width="0.800"/></svg>
<svg style="left:1520.2px;top:87.2px" width="8" height="8" viewBox="0 0 8 8"><rect x="0.400" y="0.400" width="7" height="7" fill="#fff" stroke="#555" stroke-width="0.900"/><path d="M3.900 0.400v7M0.400 3.900h7" stroke="#333" stroke-width="1.100"/></svg>
<svg style="left:306px;top:85px" width="14" height="12.5" viewBox="0 0 14 12.500"><rect x="0.400" y="0.400" width="11.200" height="11.400" fill="#dde9f5" stroke="#b3cbe2" stroke-width="0.800"/><path d="M2.300 2.200h2.200M2.300 9.800h2.200M3.400 2.200v7.600" stroke="#666" stroke-width="0.800" fill="none"/><path d="M12.800 1.200V7.800H8.800V9.900L5.200 6.600L8.800 3.300V5.400H10.600V1.900Z" fill="#fbc46c" stroke="#d9953a" stroke-width="0.800" stroke-linejoin="round"/></svg>
<svg style="left:325px;top:85px" width="13" height="13" viewBox="0 0 13 13"><rect x="0.400" y="0.400" width="10.600" height="11.400" fill="#e6f1fb" stroke="#a6c6e6" stroke-width="0.800"/><path d="M2.400 3.200h5.800M2.400 5h3.400M2.400 6.600h1.600" stroke="#9aa7b5" stroke-width="0.700"/><path d="M4.200 8.800L8 5.400V7.400H12.200V10.300H8V12.300Z" fill="#fbc46c" stroke="#d9953a" stroke-width="0.800" stroke-linejoin="round"/></svg>
<svg style="left:341px;top:90.2px" width="4.7" height="3" viewBox="0 0 5 3.2"><path d="M0 0h5L2.500 3.200z" fill="#444"/></svg>
<svg style="left:350px;top:85px" width="13" height="13" viewBox="0 0 13 13"><rect x="1.400" y="0.600" width="10.800" height="11.200" fill="#c3c7cb"/><path d="M4 3.200h6M7 5h3" stroke="#b3b7bb" stroke-width="0.700"/><path d="M8.200 8.800L4.600 5.400V7.400H0.400V10.300H4.600V12.300Z" fill="#cdbba6" stroke="#bfae9a" stroke-width="0.600" stroke-linejoin="round"/></svg>
<svg style="left:367.8px;top:90.2px" width="4.7" height="3" viewBox="0 0 5 3.2"><path d="M0 0h5L2.500 3.200z" fill="#cfcfcf"/></svg>
<svg style="left:382px;top:85.2px" width="14" height="13" viewBox="0 0 14 13"><rect x="0.4" y="0.4" width="9.4" height="5.2" fill="#fbc46c" stroke="#d9953a" stroke-width="0.800" stroke-linejoin="round"/><path d="M9.600 8.800L12.400 11.600" stroke="#dc9600" stroke-width="2" stroke-linecap="round"/><circle cx="7" cy="6.200" r="3.700" fill="#cfe4fb" stroke="#4d97e6" stroke-width="1.100"/></svg>
<svg style="left:400px;top:85.2px" width="14" height="13" viewBox="0 0 14 13"><rect x="0.4" y="0.4" width="9.4" height="5.2" fill="#fbc46c" stroke="#d9953a" stroke-width="0.800" stroke-linejoin="round"/><path d="M2.800 8.200L6.800 4.200V6.600H12.600V9.800H6.800V12.200Z" fill="#cfe4fb" stroke="#3d8be0" stroke-width="1" stroke-linejoin="round"/></svg>
<svg style="left:417px;top:85.2px" width="14" height="13" viewBox="0 0 14 13"><rect x="4.2" y="0.4" width="9.4" height="5.2" fill="#fbc46c" stroke="#d9953a" stroke-width="0.800" stroke-linejoin="round"/><path d="M10.800 8.200L6.800 4.200V6.600H0.800V9.800H6.800V12.200Z" fill="#cfe4fb" stroke="#3d8be0" stroke-width="1" stroke-linejoin="round"/></svg>
<svg style="left:435px;top:85.2px" width="13.5" height="13" viewBox="0 0 13.500 13"><rect x="0.4" y="0.4" width="9.4" height="5.2" fill="#fbc46c" stroke="#d9953a" stroke-width="0.800" stroke-linejoin="round"/><rect x="3.400" y="7.400" width="9.400" height="4.700" fill="#e6e6e6" stroke="#ababab" stroke-width="0.800"/><path d="M10.400 1.200L12.400 3.600M0.600 6.200L3 9.600" stroke="#777" stroke-width="0.700" stroke-dasharray="1 0.800" fill="none"/></svg>
<svg style="left:452.4px;top:85px" width="13.5" height="13" viewBox="0 0 13.500 13"><rect x="0.600" y="0.600" width="10" height="8.800" fill="none" stroke="#8a8a8a" stroke-width="0.900" stroke-dasharray="1.300 1"/><path d="M9 5.800V12.200L10.600 10.600L12.600 10.200Z" fill="#f0f0f0" stroke="#555" stroke-width="0.800" stroke-linejoin="round"/></svg>
<svg style="left:476px;top:85px" width="13.5" height="13" viewBox="0 0 13.500 13"><path d="M7 0.500h3.600l2.400 2.600l-2.400 2.600H7.400L5 3.100z" fill="#93deeb" stroke="#48a6ba" stroke-width="0.800" stroke-linejoin="round"/><path d="M4.600 2.600L9 7H6.400V12.600H2.800V7H0.200Z" fill="#fbc46c" stroke="#d9953a" stroke-width="0.800" stroke-linejoin="round"/></svg>
<svg style="left:493.5px;top:85px" width="13.5" height="13" viewBox="0 0 13.500 13"><path d="M7 7.400h3.600l2.400 2.600l-2.400 2.600H7L4.600 10z" fill="#93deeb" stroke="#48a6ba" stroke-width="0.800" stroke-linejoin="round"/><path d="M4.600 10.400L0.200 6H2.800V0.400H6.400V6H9Z" fill="#fbc46c" stroke="#d9953a" stroke-width="0.800" stroke-linejoin="round"/><path d="M7.200 8.400h3l1.400 1.600l-1.600 1.800H7.600L6 10.200z" fill="#93deeb"/></svg>
<svg style="left:510.8px;top:85px" width="13.8" height="13" viewBox="0 0 13.800 13"><path d="M0.4 0.4h5.0l2.600 2.6l-2.600 2.6h-5.0z" fill="#93deeb" stroke="#48a6ba" stroke-width="0.800" stroke-linejoin="round"/><path d="M5.4 7.3h5.0l2.600 2.6l-2.600 2.6h-5.0z" fill="#e6e6e6" stroke="#adadad" stroke-width="0.800" stroke-linejoin="round"/><path d="M2.400 6.600L5 10M8.600 5.600v1.200" stroke="#666" stroke-width="0.800" stroke-dasharray="0.900 0.800" fill="none"/></svg>
<svg style="left:534px;top:85px" width="14" height="13" viewBox="0 0 14 13"><path d="M2 10.200H13.2M2 12.200H13.2" stroke="#8e8e8e" stroke-width="0.900"/><path d="M10 2.500h3.200M10 7.500h3.200" stroke="#7a7a7a" stroke-width="1"/><path d="M10 5h3.200" stroke="#a8a8a8" stroke-width="1"/><path d="M0.600 5L4.400 1.400V3.400H8.600V6.600H4.400V8.600Z" fill="#cfe4fb" stroke="#3d8be0" stroke-width="1" stroke-linejoin="round"/></svg>
<svg style="left:551.5px;top:85px" width="14" height="13" viewBox="0 0 14 13"><path d="M2 10.200H13.4M2 12.200H13.4" stroke="#8e8e8e" stroke-width="0.900"/><path d="M10.2 2.500h3.200M10.2 7.500h3.200" stroke="#7a7a7a" stroke-width="1"/><path d="M10.2 5h3.200" stroke="#a8a8a8" stroke-width="1"/><path d="M9 5L5.200 1.400V3.400H0.800V6.600H5.200V8.600Z" fill="#cfe4fb" stroke="#3d8be0" stroke-width="1" stroke-linejoin="round"/></svg>
<svg style="left:576.4px;top:86.6px" width="10.6" height="10.6" viewBox="0 0 10.600 10.600"><circle cx="5.200" cy="5.250" r="4.500" fill="#e9726b" stroke="#c9544f" stroke-width="0.800"/></svg>
<svg style="left:594px;top:86.9px" width="10.5" height="10.5" viewBox="0 0 10.500 10.500"><rect x="0.500" y="0.500" width="9.200" height="9.200" rx="0.500" fill="#ececec" stroke="#a6a6a6" stroke-width="0.900"/></svg>
<svg style="left:616.6px;top:85.6px" width="12" height="12.5" viewBox="0 0 12 12.500"><path d="M2.200 0.600L0.600 6.600M5.200 0.600L3.600 6.600" stroke="#74d94c" stroke-width="1.700"/><path d="M8.200 3.800h3.200M8.200 6.600h3.200" stroke="#8e8e8e" stroke-width="1"/><path d="M0.400 8.900H11.400" stroke="#8e8e8e" stroke-width="1.500"/><path d="M0.400 11.600H11.400" stroke="#8e8e8e" stroke-width="0.900"/></svg>
<svg style="left:634px;top:85.6px" width="12" height="12.5" viewBox="0 0 12 12.500"><path d="M8.200 3.800h3.200M8.200 6.600h3.200" stroke="#8e8e8e" stroke-width="1"/><path d="M0.400 8.900H11.400" stroke="#8e8e8e" stroke-width="1.500"/><path d="M0.400 11.600H11.400" stroke="#8e8e8e" stroke-width="0.900"/></svg>
<svg style="left:652.6px;top:86px" width="10.5" height="12" viewBox="0 0 10.500 12"><path d="M0.500 2.200v7.600c0 1 2 1.800 4.700 1.800s4.700-0.800 4.700-1.800V2.200" fill="#ececec" stroke="#c2c2c2" stroke-width="0.800"/><ellipse cx="5.200" cy="2.200" rx="4.700" ry="1.700" fill="#f2f2f2" stroke="#c2c2c2" stroke-width="0.800"/><path d="M0.500 4.800c0 1 2 1.800 4.700 1.800s4.700-0.800 4.700-1.800M0.500 7.400c0 1 2 1.800 4.700 1.800s4.700-0.800 4.700-1.800" fill="none" stroke="#cfcfcf" stroke-width="0.700"/></svg>
<svg style="left:211.6px;top:105px" width="8" height="10" viewBox="0 0 8 10"><path d="M3.900 0.400c2 0 3.500 1.400 3.500 3.200c0 1.400-1 2-1.400 3.200H1.800C1.400 5.600 0.400 5 0.400 3.600C0.400 1.800 1.900 0.400 3.900 0.400z" fill="#ecc83c" stroke="#b8962a" stroke-width="0.700"/><ellipse cx="2.900" cy="2.800" rx="1.200" ry="1.400" fill="#fff4b0" opacity="0.800"/><rect x="2" y="7" width="3.800" height="2.200" rx="0.600" fill="#8fa3bb" stroke="#5f7590" stroke-width="0.500"/></svg>
<svg style="left:227px;top:148.8px" width="10" height="49" viewBox="0 0 10 49"><path d="M4.500 8.600V47.400H9" fill="none" stroke="#8a8a8a" stroke-width="0.900"/><rect x="0.450" y="0.450" width="8.100" height="8.100" fill="#fff" stroke="#8c8c8c" stroke-width="0.900"/><path d="M2.700 4.500h3.600" stroke="#777" stroke-width="0.900"/></svg>
<svg style="left:245px;top:160px" width="1" height="43" viewBox="0 0 1 43"><path d="M0.500 0V43" stroke="#c9ced6" stroke-width="0.900" stroke-dasharray="1.200 1.200"/></svg>
<svg style="left:417.3px;top:186.6px" width="26" height="3.2" viewBox="0 0 26 3.200"><path d="M0 1.600L1.5 0.4L4.5 2.6L7.5 0.4L10.5 2.6L13.5 0.4L16.5 2.6L19.5 0.4L22.5 2.6L25.5 0.4" fill="none" stroke="#f02020" stroke-width="0.700"/></svg>
<svg style="left:7px;top:818px" width="9" height="9" viewBox="0 0 9 9"><rect x="2.600" y="0.500" width="5.600" height="5.800" rx="0.600" fill="#f0f0f0" stroke="#8a8a8a" stroke-width="0.900"/><rect x="0.500" y="2.200" width="5.900" height="6" rx="0.600" fill="#f0f0f0" stroke="#6a6a6a" stroke-width="0.900"/></svg>
<svg style="left:29px;top:816px" width="14" height="13" viewBox="0 0 14 13"><rect x="0.500" y="0.500" width="11.200" height="10" fill="#e9eff6" stroke="#7b93ad" stroke-width="0.900"/><rect x="0.900" y="0.900" width="10.400" height="1.800" fill="#86a0bb"/><path d="M3.200 3v7.200" stroke="#b5c4d4" stroke-width="0.600"/><ellipse cx="8.400" cy="8.800" rx="4.400" ry="3.400" fill="#ecb44e" stroke="#c68a24" stroke-width="0.700"/><path d="M5 5.200c0.800 0.200 1.400 1 1.400 2" stroke="#c68a24" stroke-width="1.300" fill="none"/><path d="M6.400 8.800h4" stroke="#fbe3b0" stroke-width="1.100"/></svg>
</div>
<div id="t">
<span class="t" style="left:32px;top:8.00px;font:normal 10px/1 'Liberation Sans',sans-serif;color:#1a1a1a;letter-spacing:-0.280px;transform:scaleX(0.9159);transform-origin:0 0;"><u>F</u>ile</span>
<span class="t" style="left:59px;top:8.00px;font:normal 10px/1 'Liberation Sans',sans-serif;color:#1a1a1a;letter-spacing:-0.280px;transform:scaleX(0.9759);transform-origin:0 0;"><u>E</u>dit</span>
<span class="t" style="left:88px;top:8.00px;font:normal 10px/1 'Liberation Sans',sans-serif;color:#1a1a1a;letter-spacing:-0.280px;transform:scaleX(0.9681);transform-origin:0 0;"><u>V</u>iew</span>
<span class="t" style="left:121px;top:8.00px;font:normal 10px/1 'Liberation Sans',sans-serif;color:#1a1a1a;letter-spacing:-0.280px;transform:scaleX(0.9998);transform-origin:0 0;"><u>N</u>avigate</span>
<span class="t" style="left:171px;top:8.00px;font:normal 10px/1 'Liberation Sans',sans-serif;color:#1a1a1a;letter-spacing:-0.280px;transform:scaleX(0.9575);transform-origin:0 0;"><u>S</u>ource</span>
<span class="t" style="left:212.5px;top:8.00px;font:normal 10px/1 'Liberation Sans',sans-serif;color:#1a1a1a;letter-spacing:-0.280px;transform:scaleX(0.9906);transform-origin:0 0;">Ref<u>a</u>ctor</span>
<span class="t" style="left:261px;top:8.00px;font:normal 10px/1 'Liberation Sans',sans-serif;color:#1a1a1a;letter-spacing:-0.280px;transform:scaleX(0.9270);transform-origin:0 0;"><u>R</u>un</span>
<span class="t" style="left:290px;top:8.00px;font:normal 10px/1 'Liberation Sans',sans-serif;color:#1a1a1a;letter-spacing:-0.280px;transform:scaleX(0.9877);transform-origin:0 0;"><u>D</u>ebug</span>
<span class="t" style="left:331px;top:8.00px;font:normal 10px/1 'Liberation Sans',sans-serif;color:#1a1a1a;letter-spacing:-0.143px;"><u>P</u>rofile</span>
<span class="t" style="left:372px;top:8.00px;font:normal 10px/1 'Liberation Sans',sans-serif;color:#1a1a1a;letter-spacing:-0.280px;transform:scaleX(0.9317);transform-origin:0 0;">Tea<u>m</u></span>
<span class="t" style="left:407px;top:8.00px;font:normal 10px/1 'Liberation Sans',sans-serif;color:#1a1a1a;letter-spacing:-0.215px;"><u>T</u>ools</span>
<span class="t" style="left:442.5px;top:8.00px;font:normal 10px/1 'Liberation Sans',sans-serif;color:#1a1a1a;letter-spacing:-0.016px;"><u>W</u>indow</span>
<span class="t" style="left:490.5px;top:8.00px;font:normal 10px/1 'Liberation Sans',sans-serif;color:#1a1a1a;letter-spacing:-0.280px;transform:scaleX(0.9879);transform-origin:0 0;"><u>H</u>elp</span>
<span class="t" style="left:688.4px;top:8.00px;font:normal 10px/1 'Liberation Sans',sans-serif;color:#6a6a6a;letter-spacing:-0.280px;transform:scaleX(0.9781);transform-origin:0 0;">phpschools - Apache NetBeans IDE 20</span>
<span class="t" style="left:1274.8px;top:9.00px;font:normal 10px/1 'Liberation Sans',sans-serif;color:#a0a0a0;letter-spacing:-0.280px;transform:scaleX(0.9776);transform-origin:0 0;">Search (Ctrl+I)</span>
<span class="t" style="left:209px;top:36.00px;font:normal 10px/1 'Liberation Sans',sans-serif;color:#1a1a1a;letter-spacing:-0.215px;">&lt;default&gt;</span>
<span class="t" style="left:8px;top:66.00px;font:normal 10px/1 'Liberation Sans',sans-serif;color:#1a1a1a;letter-spacing:-0.280px;transform:scaleX(0.9805);transform-origin:0 0;">Projects</span>
<span class="t" style="left:70.5px;top:66.00px;font:normal 10px/1 'Liberation Sans',sans-serif;color:#444;letter-spacing:-0.280px;transform:scaleX(0.8998);transform-origin:0 0;">Files</span>
<span class="t" style="left:111px;top:66.00px;font:normal 10px/1 'Liberation Sans',sans-serif;color:#444;letter-spacing:-0.280px;transform:scaleX(0.9203);transform-origin:0 0;">Services</span>
<span class="t" style="left:38.8px;top:85.00px;font:normal 10px/1 'Liberation Sans',sans-serif;color:#1a1a1a;letter-spacing:-0.266px;">phpschools</span>
<span class="t" style="left:53px;top:100.00px;font:normal 10px/1 'Liberation Sans',sans-serif;color:#1a1a1a;letter-spacing:-0.280px;transform:scaleX(0.9334);transform-origin:0 0;">Source Files</span>
<span class="t" style="left:67.5px;top:114.00px;font:normal 10px/1 'Liberation Sans',sans-serif;color:#1a1a1a;letter-spacing:-0.248px;">Writing Your First PHP Script</span>
<span class="t" style="left:67.5px;top:128.00px;font:normal 10px/1 'Liberation Sans',sans-serif;color:#1a1a1a;letter-spacing:-0.034px;">embedding php in html</span>
<span class="t" style="left:67.5px;top:143.00px;font:normal 10px/1 'Liberation Sans',sans-serif;color:#1a1a1a;letter-spacing:-0.266px;">phptags</span>
<span class="t" style="left:82px;top:157.00px;font:normal 10px/1 'Liberation Sans',sans-serif;color:#1a1a1a;letter-spacing:-0.059px;">comment.php</span>
<span class="t" style="left:82px;top:172.00px;font:normal 10px/1 'Liberation Sans',sans-serif;color:#1a1a1a;letter-spacing:-0.064px;">myfile.php</span>
<span class="t" style="left:82px;top:186.00px;font:normal 10px/1 'Liberation Sans',sans-serif;color:#1a1a1a;letter-spacing:-0.170px;">testfile.php</span>
<span class="t" style="left:53px;top:200.00px;font:normal 10px/1 'Liberation Sans',sans-serif;color:#1a1a1a;letter-spacing:-0.280px;transform:scaleX(0.9994);transform-origin:0 0;">Include Path</span>
<span class="t" style="left:213px;top:66.00px;font:normal 10px/1 'Liberation Sans',sans-serif;color:#444;letter-spacing:-0.280px;transform:scaleX(0.9610);transform-origin:0 0;">Start Page</span>
<span class="t" style="left:299.5px;top:66.00px;font:normal 10px/1 'Liberation Sans',sans-serif;color:#333;letter-spacing:-0.064px;">myfile.php</span>
<span class="t" style="left:384.5px;top:66.00px;font:normal 10px/1 'Liberation Sans',sans-serif;color:#333;letter-spacing:-0.125px;">testfile.php</span>
<span class="t" style="left:472px;top:66.00px;font:bold 10px/1 'Liberation Sans',sans-serif;color:#111;letter-spacing:-0.280px;transform:scaleX(0.9958);transform-origin:0 0;">comment.php</span>
<span class="t" style="left:213.5px;top:87.00px;font:normal 10px/1 'Liberation Sans',sans-serif;color:#1a1a1a;letter-spacing:-0.280px;transform:scaleX(0.9575);transform-origin:0 0;">Source</span>
<span class="t" style="left:259px;top:87.00px;font:normal 10px/1 'Liberation Sans',sans-serif;color:#1a1a1a;letter-spacing:-0.021px;">History</span>
<span class="t" style="left:213.2px;top:120.00px;font:normal 9.4px/1 'Liberation Sans',sans-serif;color:#4a4a4a;letter-spacing:0.000px;">2</span>
<span class="t" style="left:213.2px;top:135.00px;font:normal 9.4px/1 'Liberation Sans',sans-serif;color:#4a4a4a;letter-spacing:0.000px;">3</span>
<span class="t" style="left:213.2px;top:149.00px;font:normal 9.4px/1 'Liberation Sans',sans-serif;color:#4a4a4a;letter-spacing:0.000px;">4</span>
<span class="t" style="left:213.2px;top:164.00px;font:normal 9.4px/1 'Liberation Sans',sans-serif;color:#4a4a4a;letter-spacing:0.000px;">5</span>
<span class="t" style="left:213.2px;top:178.00px;font:normal 9.4px/1 'Liberation Sans',sans-serif;color:#4a4a4a;letter-spacing:0.000px;">6</span>
<span class="t" style="left:213.2px;top:192.00px;font:normal 9.4px/1 'Liberation Sans',sans-serif;color:#4a4a4a;letter-spacing:0.000px;">7</span>
<span class="t" style="left:245px;top:106.00px;font:bold 10.4px/1 'Liberation Mono',monospace;color:#000;letter-spacing:0.160px;">&lt;?php</span>
<span class="t" style="left:245px;top:149.00px;font:normal 10.4px/1 'Liberation Mono',monospace;color:#9a9a9a;letter-spacing:0.160px;">/**</span>
<span class="t" style="left:245px;top:164.00px;font:normal 10.4px/1 'Liberation Mono',monospace;color:#9a9a9a;letter-spacing:0.160px;"> *</span>
<span class="t" style="left:245px;top:178.00px;font:normal 10.4px/1 'Liberation Mono',monospace;color:#9a9a9a;letter-spacing:0.160px;"> * you can use comment for muli line</span>
<span class="t" style="left:245px;top:192.00px;font:normal 10.4px/1 'Liberation Mono',monospace;color:#9a9a9a;letter-spacing:0.160px;"> * start by /** and end by */</span>
<span class="t" style="left:45px;top:819.00px;font:normal 10px/1 'Liberation Sans',sans-serif;color:#1a1a1a;letter-spacing:-0.006px;">Output</span>
<span class="t" style="left:1337.8px;top:819.00px;font:normal 10px/1 'Liberation Sans',sans-serif;color:#1a1a1a;letter-spacing:-0.280px;transform:scaleX(0.8965);transform-origin:0 0;">7:28</span>
<span class="t" style="left:1393px;top:819.00px;font:normal 10px/1 'Liberation Sans',sans-serif;color:#1a1a1a;letter-spacing:-0.280px;transform:scaleX(0.8689);transform-origin:0 0;">INS</span>
<span class="t" style="left:1412.5px;top:819.00px;font:normal 10px/1 'Liberation Sans',sans-serif;color:#1a1a1a;letter-spacing:-0.280px;transform:scaleX(0.9387);transform-origin:0 0;">Unix (LF)</span>
<span class="t" style="left:1484px;top:819.00px;font:normal 10px/1 'Liberation Sans',sans-serif;color:#1a1a1a;letter-spacing:-0.280px;transform:scaleX(0.9327);transform-origin:0 0;">PHP 8.2</span>
<span class="t" style="left:536.5px;top:37.00px;font:normal 10.6px/1 'Liberation Sans',sans-serif;color:#3a3a3a;letter-spacing:-0.280px;text-shadow:0 0 1px #fff,0 0 1px #fff,0 0 1.5px #fff,0 0 2px #dcecff;transform:scaleX(0.8832);transform-origin:0 0;">443.9/524.0MB</span>
</div>
</body></html>
